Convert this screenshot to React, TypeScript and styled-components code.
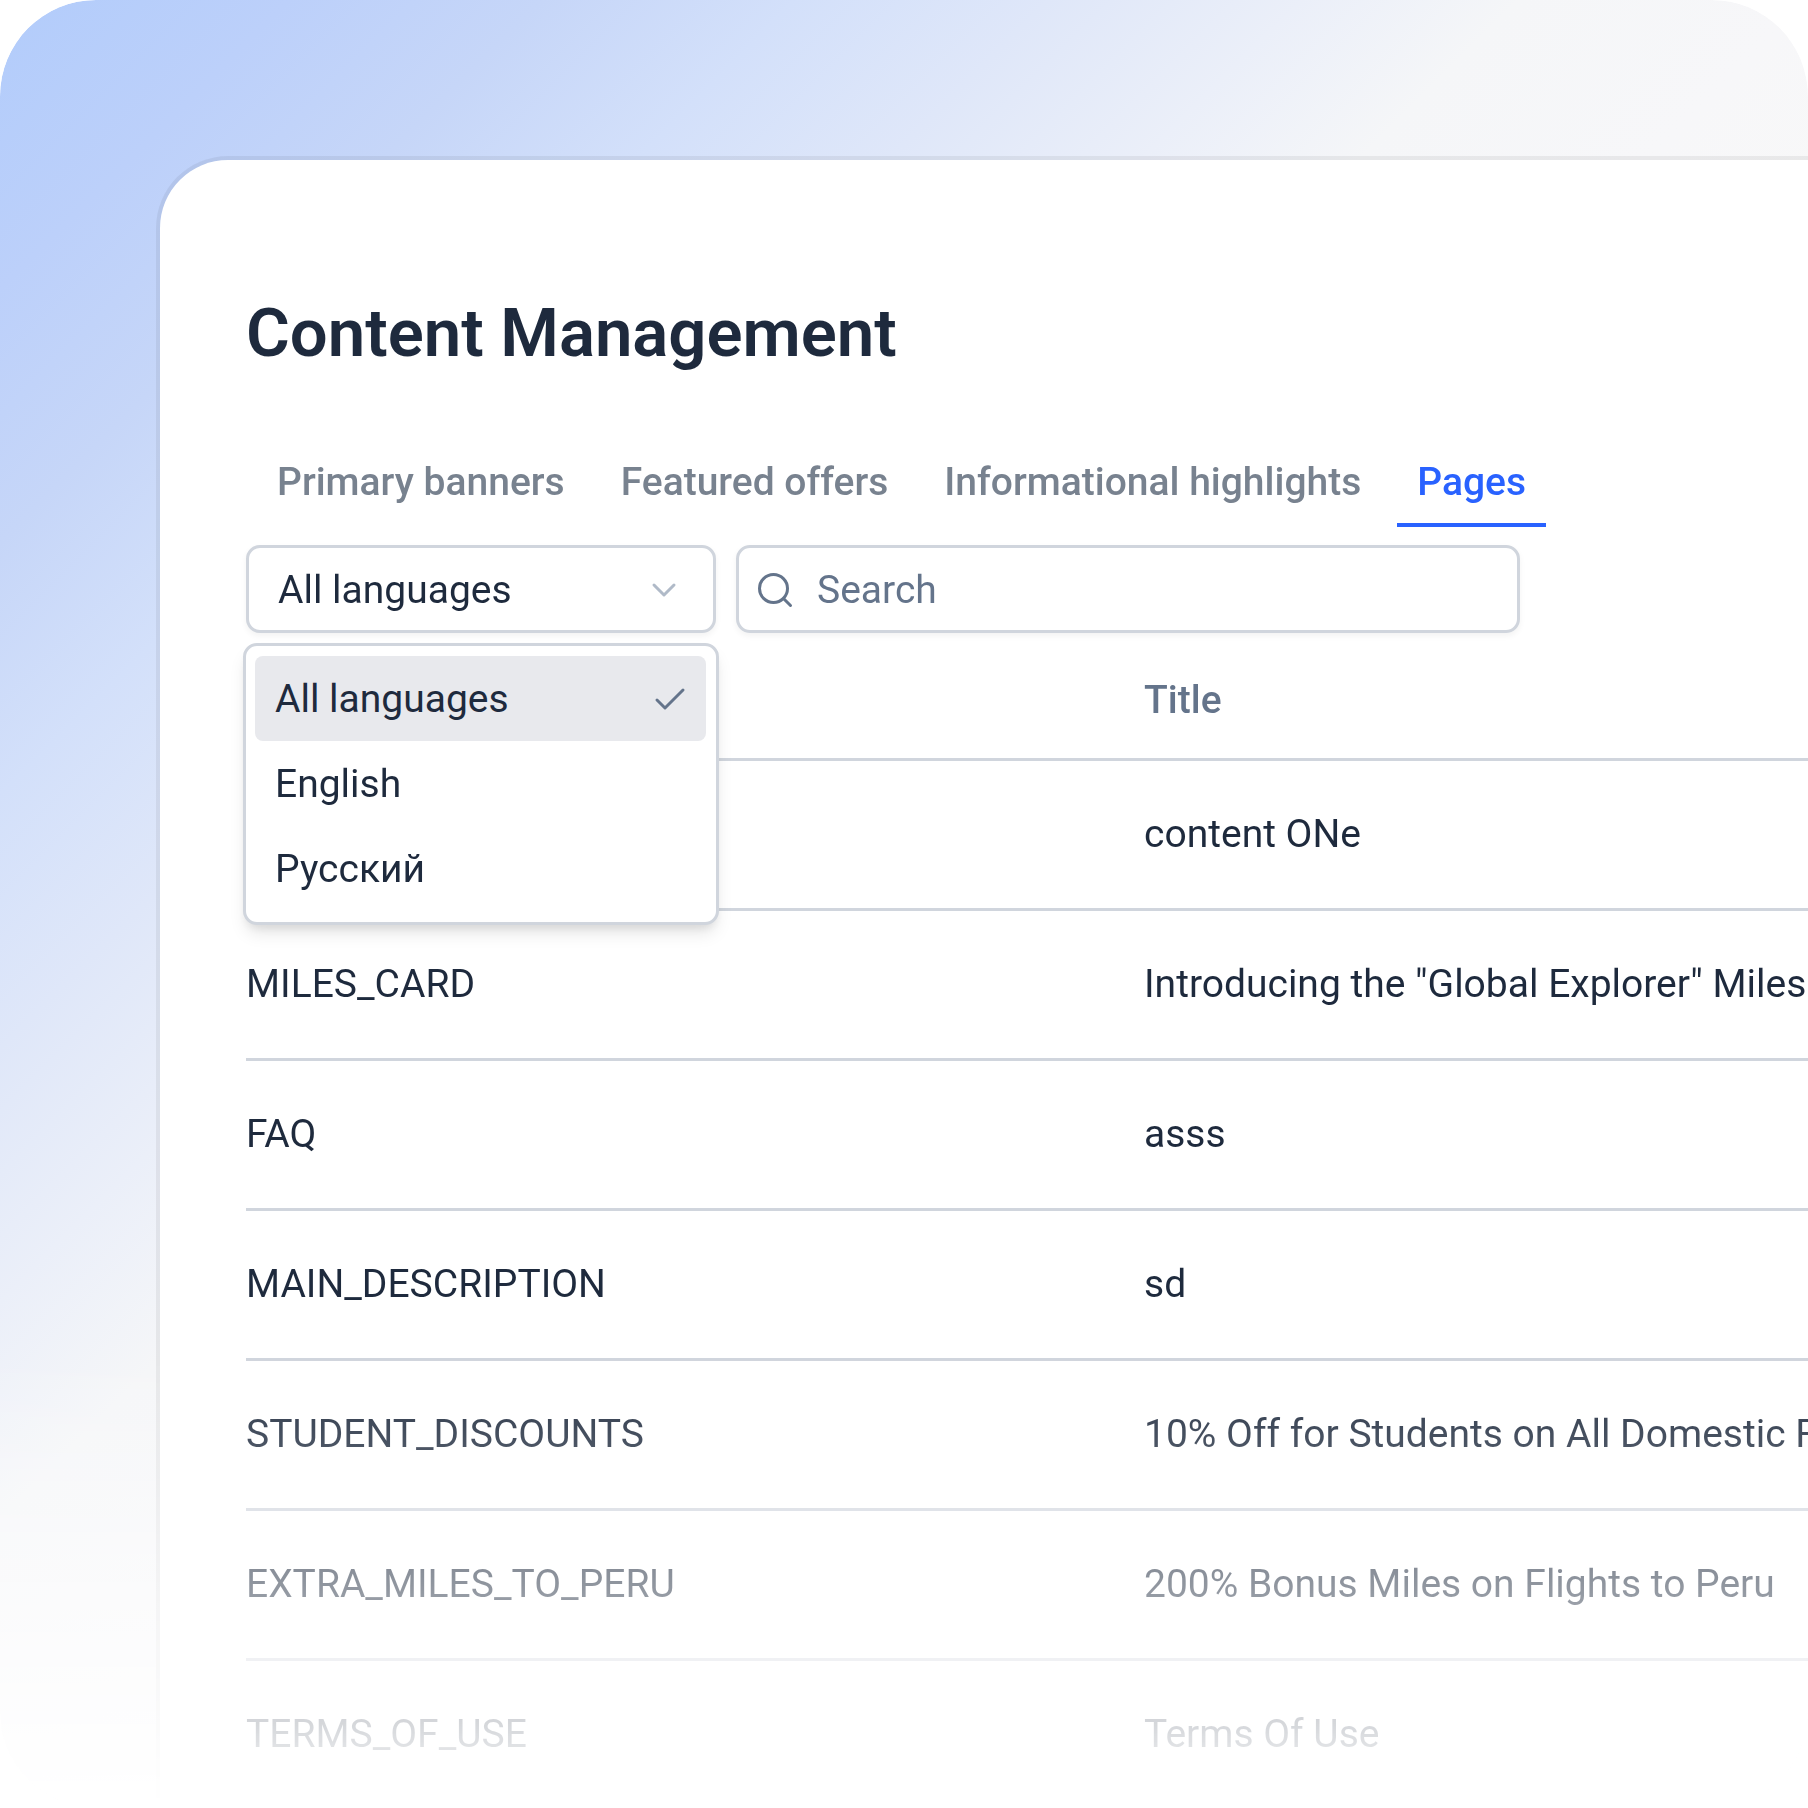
import { useState } from "react";
import styled, { createGlobalStyle } from "styled-components";

const ink = "#1e2a3d";
const slate = "#64748b";
const line = "#d0d5dd";

const GlobalStyle = createGlobalStyle`
  *, *::before, *::after { box-sizing: border-box; }
  body {
    margin: 0;
    background: #fff;
    color: ${ink};
    font-family: Roboto, "Noto Sans", sans-serif;
    font-size: 39px;
    line-height: 56px;
  }
  button, input { font: inherit; color: inherit; }
`;

const Backdrop = styled.main`
  display: flex;
  height: 100vh;
  padding: 160px 0 0 160px;
  overflow: hidden;
  border-radius: 96px;
  background: linear-gradient(135deg, #b2ccfb 0%, #bcd0fa 8%, #c6d6f8 15%, #d3e0fa 22%, #dfe7f9 29%, #ebeff9 36%, #f5f6f8 42%, #f7f7f9 50%, #f8f8f8 56%);
  mask-image: linear-gradient(to bottom, #000 75%, transparent 100%);
`;

const Card = styled.section`
  flex: 1;
  min-width: 0;
  height: max-content;
  padding: 141px 0 0 86px;
  border-top-left-radius: 68px;
  background: #fff;
  box-shadow: 0 0 0 4px rgba(0, 0, 0, 0.06);
`;

const Heading = styled.h1`
  margin: 0;
  font-size: 67px;
  line-height: 64px;
  font-weight: 600;
`;

const TabList = styled.div`
  display: flex;
  gap: 16px;
  margin-top: 77px;
  padding-left: 11px;
`;

const Tab = styled.button<{ $active: boolean }>`
  padding: 12px 20px 13px;
  border: 0;
  border-bottom: 4px solid ${(p) => (p.$active ? "#2962ff" : "transparent")};
  background: none;
  color: ${(p) => (p.$active ? "#2962ff" : "#78828f")};
  font-weight: 500;
  white-space: nowrap;
  cursor: pointer;
`;

const Filters = styled.div`
  display: flex;
  gap: 20px;
  margin-top: 18px;
`;

const LanguagePicker = styled.div`
  position: relative;
  width: 470px;
`;

const PickerButton = styled.button`
  display: flex;
  align-items: center;
  justify-content: space-between;
  width: 100%;
  height: 88px;
  padding: 2px 32px 0 29px;
  border: 3px solid ${line};
  border-radius: 14px;
  background: #fff;
  box-shadow: 0 3px 6px rgba(0, 0, 0, 0.05);
  cursor: pointer;
`;

const Menu = styled.ul`
  position: absolute;
  z-index: 1;
  top: 98px;
  left: -3px;
  right: -3px;
  margin: 0;
  padding: 10px 10px 11px 9px;
  list-style: none;
  border: 3px solid ${line};
  border-radius: 14px;
  background: #fff;
  box-shadow: 0 11px 17px -3px rgba(0, 0, 0, 0.1), 0 6px 11px -4px rgba(0, 0, 0, 0.1);
`;

const Option = styled.li<{ $selected: boolean }>`
  display: flex;
  align-items: center;
  justify-content: space-between;
  height: 85px;
  padding: 0 20px;
  border-radius: 8px;
  background: ${(p) => (p.$selected ? "#e8e9ed" : "transparent")};
  cursor: pointer;
`;

const SearchBox = styled.label`
  display: flex;
  align-items: center;
  gap: 22px;
  width: 784px;
  height: 88px;
  padding: 2px 16px 0;
  border: 3px solid ${line};
  border-radius: 14px;
  box-shadow: 0 3px 6px rgba(0, 0, 0, 0.05);
  color: ${slate};
`;

const SearchInput = styled.input`
  flex: 1;
  min-width: 0;
  padding: 0;
  border: 0;
  outline: 0;
  background: none;
  color: ${ink};
  &::placeholder { color: ${slate}; opacity: 1; }
`;

const Table = styled.table`
  width: 100%;
  margin-top: 7px;
  table-layout: fixed;
  border-collapse: separate;
  border-spacing: 0;
  text-align: left;
  white-space: nowrap;
`;

const KeyHead = styled.th`
  width: 898px;
  height: 121px;
  padding: 2px 0 0;
  border-bottom: 3px solid ${line};
  color: ${slate};
  font-weight: 500;
`;

const TitleHead = styled(KeyHead)`
  width: auto;
`;

const Cell = styled.td`
  height: 150px;
  padding: 0 0 1px;
  overflow: hidden;
  border-bottom: 3px solid ${line};
`;

const ChevronIcon = () => (
  <svg width="34" height="34" viewBox="0 0 34 34" fill="none" stroke="#b0bac8" strokeWidth="3" strokeLinecap="round" strokeLinejoin="round" aria-hidden="true">
    <path d="M7 12l10 10 10-10" />
  </svg>
);

const CheckIcon = () => (
  <svg width="34" height="34" viewBox="0 0 34 34" fill="none" stroke={slate} strokeWidth="3" strokeLinecap="round" strokeLinejoin="round" aria-hidden="true">
    <path d="M5 18l8 8L31 8" />
  </svg>
);

const SearchIcon = () => (
  <svg width="40" height="40" viewBox="0 0 40 40" fill="none" stroke={slate} strokeWidth="3" strokeLinecap="round" strokeLinejoin="round" aria-hidden="true">
    <circle cx="18.500" cy="18.500" r="14" />
    <path d="M28.500 28.500l7 7" />
  </svg>
);

const tabs = ["Primary banners", "Featured offers", "Informational highlights", "Pages"];
const languages = ["All languages", "English", "Русский"];
const pages = [
  { key: "", title: "content ONe" },
  { key: "MILES_CARD", title: 'Introducing the "Global Explorer" Miles' },
  { key: "FAQ", title: "asss" },
  { key: "MAIN_DESCRIPTION", title: "sd" },
  { key: "STUDENT_DISCOUNTS", title: "10% Off for Students on All Domestic Flights" },
  { key: "EXTRA_MILES_TO_PERU", title: "200% Bonus Miles on Flights to Peru" },
  { key: "TERMS_OF_USE", title: "Terms Of Use" },
];

export default function App() {
  const [tab, setTab] = useState("Pages");
  const [language, setLanguage] = useState(languages[0]);
  const [open, setOpen] = useState(true);

  return (
    <>
      <GlobalStyle />
      <Backdrop>
        <Card>
          <Heading>Content Management</Heading>
          <TabList role="tablist">
            {tabs.map((name) => (
              <Tab key={name} role="tab" type="button" aria-selected={name === tab} $active={name === tab} onClick={() => setTab(name)}>
                {name}
              </Tab>
            ))}
          </TabList>
          <Filters>
            <LanguagePicker>
              <PickerButton type="button" aria-haspopup="listbox" aria-expanded={open} onClick={() => setOpen(!open)}>
                {language}
                <ChevronIcon />
              </PickerButton>
              {open && (
                <Menu role="listbox">
                  {languages.map((name) => (
                    <Option
                      key={name}
                      role="option"
                      aria-selected={name === language}
                      $selected={name === language}
                      onClick={() => {
                        setLanguage(name);
                        setOpen(false);
                      }}
                    >
                      {name}
                      {name === language && <CheckIcon />}
                    </Option>
                  ))}
                </Menu>
              )}
            </LanguagePicker>
            <SearchBox>
              <SearchIcon />
              <SearchInput type="text" placeholder="Search" aria-label="Search" />
            </SearchBox>
          </Filters>
          <Table>
            <thead>
              <tr>
                <KeyHead scope="col" />
                <TitleHead scope="col">Title</TitleHead>
              </tr>
            </thead>
            <tbody>
              {pages.map((page) => (
                <tr key={page.title}>
                  <Cell>{page.key}</Cell>
                  <Cell>{page.title}</Cell>
                </tr>
              ))}
            </tbody>
          </Table>
        </Card>
      </Backdrop>
    </>
  );
}
